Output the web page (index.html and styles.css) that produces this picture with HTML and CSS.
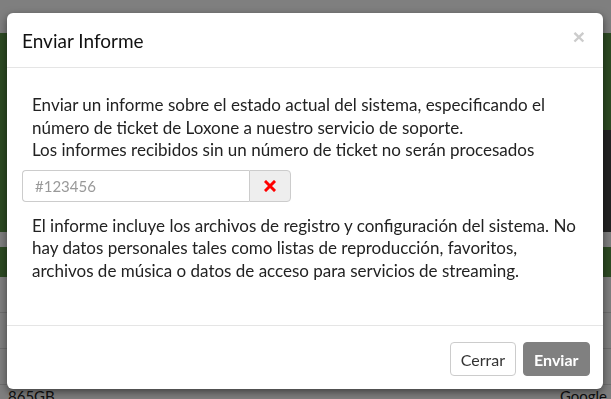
FILE: index.html
```html
<!DOCTYPE html>
<html lang="es">
<head>
<meta charset="UTF-8">
<title>Enviar Informe</title>
<link rel="stylesheet" href="styles.css">
</head>
<body>
<div class="page">
  <div class="topbar"></div>
  <div class="hero">
    <div class="hero-dark"></div>
  </div>
  <div class="band"></div>
  <div class="hero-low"></div>
  <div class="table">
    <div class="row"></div>
    <div class="row"></div>
    <div class="row"></div>
    <div class="row last">
      <span class="cell">865GB</span>
      <span class="cell right">Google</span>
    </div>
  </div>
</div>

<div class="backdrop"></div>

<div class="modal">
  <div class="modal-header">
    <h4 class="modal-title">Enviar Informe</h4>
    <button type="button" class="close">&times;</button>
  </div>
  <div class="modal-body">
    <p>Enviar un informe sobre el estado actual del sistema, especificando el número de ticket de Loxone a nuestro servicio de soporte.<br>
    Los informes recibidos sin un número de ticket no serán procesados</p>
    <div class="input-group">
      <input type="text" placeholder="#123456">
      <span class="addon">
        <svg width="12" height="12" viewBox="0 0 12 12"><path d="M2 2 L10 10 M10 2 L2 10" stroke="#f00" stroke-width="3" stroke-linecap="square"/></svg>
      </span>
    </div>
    <p>El informe incluye los archivos de registro y configuración del sistema. No hay datos personales tales como listas de reproducción, favoritos, archivos de música o datos de acceso para servicios de streaming.</p>
  </div>
  <div class="modal-footer">
    <button type="button" class="btn">Cerrar</button>
    <button type="button" class="btn btn-primary">Enviar</button>
  </div>
</div>
</body>
</html>
```

FILE: styles.css
```css
body {
  margin: 0;
  font-family: 'Lato', sans-serif;
  background: #fff;
  overflow: hidden;
}
.page {
  width: 611px;
  height: 399px;
  overflow: hidden;
}
.topbar {
  height: 33px;
  background: #fff;
}
.hero {
  height: 199px;
  background: #5a9446;
  position: relative;
}
.hero-dark {
  position: absolute;
  right: 0;
  top: 97px;
  width: 10px;
  height: 102px;
  background: #444;
}
.band {
  height: 15px;
  background: #fff;
}
.hero-low {
  height: 30px;
  background: #5a9446;
}
.table .row {
  height: 35px;
  border-bottom: 1px solid #ddd;
  background: #fff;
}
.table .row.last {
  display: flex;
  justify-content: space-between;
  font-size: 15px;
  line-height: 18px;
  color: #222;
  padding: 2px 4px 0 8px;
  border: none;
}
.backdrop {
  position: fixed;
  inset: 0;
  background: rgba(0, 0, 0, 0.5);
}
.modal {
  position: absolute;
  left: 7px;
  top: 13px;
  width: 596px;
  height: 376px;
  background: #fff;
  border-radius: 6px;
  box-shadow: 0 3px 9px rgba(0, 0, 0, 0.5);
  display: flex;
  flex-direction: column;
}
.modal-header {
  height: 55px;
  box-sizing: border-box;
  padding: 0 18px 0 15px;
  border-bottom: 1px solid #e5e5e5;
  display: flex;
  align-items: center;
  justify-content: space-between;
}
.modal-title {
  margin: 0;
  font-size: 19px;
  font-weight: 400;
  color: #111;
}
.close {
  border: none;
  background: none;
  padding: 0;
  font-size: 21px;
  font-weight: 700;
  color: #ccc;
  font-family: 'Liberation Sans', sans-serif;
  margin-top: -6px;
}
.modal-body {
  flex: 1;
  padding: 26px 15px 0 15px;
  color: #222;
}
.modal-body p {
  margin: 0;
  padding: 0 5px 0 10px;
  font-size: 17px;
  line-height: 22.5px;
}
.input-group {
  display: flex;
  width: 269px;
  height: 32px;
  margin: 8px 0 13px;
}
.input-group input {
  flex: 1;
  min-width: 0;
  border: 1px solid #ccc;
  border-right: none;
  border-radius: 4px 0 0 4px;
  padding: 0 12px;
  font-family: 'Lato', sans-serif;
  font-size: 15px;
  color: #555;
}
.input-group input::placeholder {
  color: #999;
}
.addon {
  width: 40px;
  background: #eee;
  border: 1px solid #ccc;
  border-radius: 0 4px 4px 0;
  display: flex;
  align-items: center;
  justify-content: center;
}
.modal-footer {
  height: 64px;
  box-sizing: border-box;
  border-top: 1px solid #e5e5e5;
  padding: 0 13px 13px 0;
  display: flex;
  justify-content: flex-end;
  align-items: flex-end;
  gap: 7px;
}
.btn {
  height: 34px;
  padding: 0 9.5px;
  font-family: 'Lato', sans-serif;
  font-size: 16px;
  border: 1px solid #ccc;
  border-radius: 4px;
  background: #fff;
  color: #333;
  cursor: pointer;
}
.btn-primary {
  background: #808080;
  border-color: #808080;
  color: #fff;
  font-weight: 700;
  padding: 0 10.5px;
}
```
